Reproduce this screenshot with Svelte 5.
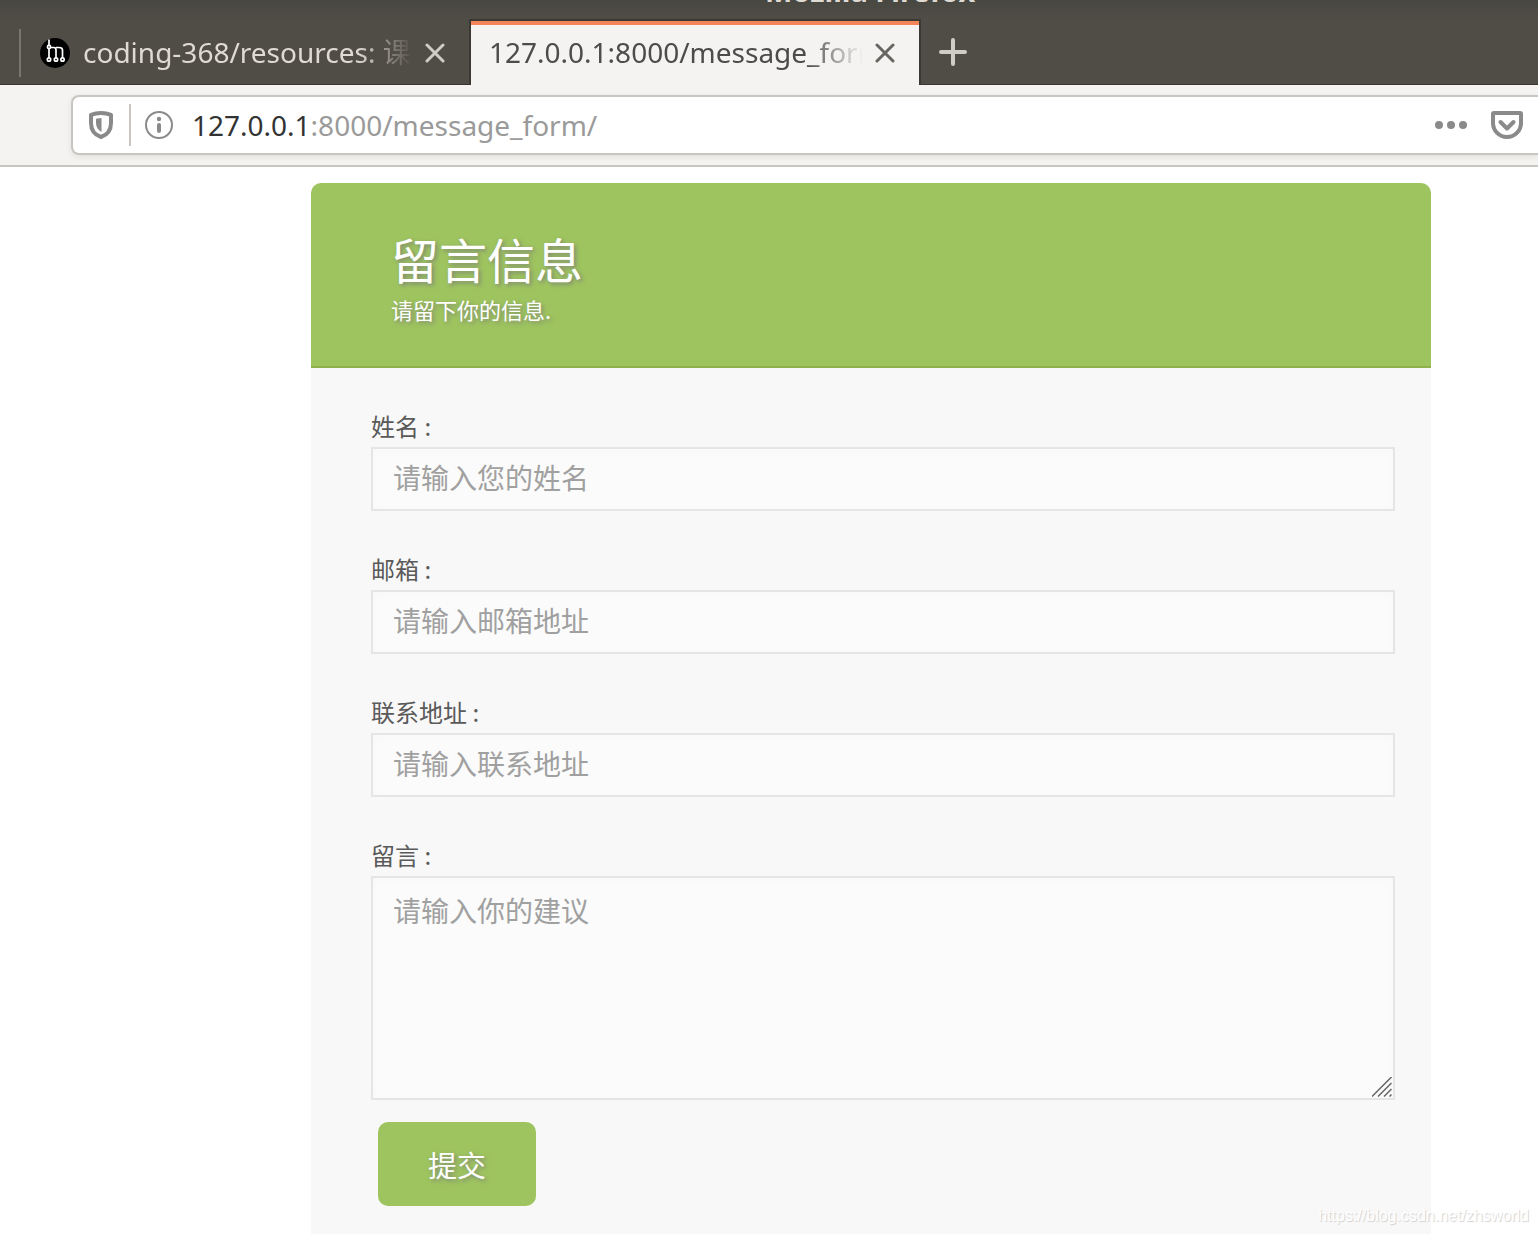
<script>
  const fields = [
    { id: 'name', label: '姓名 :', type: 'text', placeholder: '请输入您的姓名' },
    { id: 'email', label: '邮箱 :', type: 'email', placeholder: '请输入邮箱地址' },
    { id: 'address', label: '联系地址 :', type: 'text', placeholder: '请输入联系地址' }
  ];
  let values = $state({ name: '', email: '', address: '', message: '' });
</script>

<div class="window">
  <header class="chrome">
    <div class="titlebar"><span>Mozilla Firefox</span></div>
    <div class="tabs">
      <div class="tab">
        <svg class="favicon" viewBox="0 0 30 30" aria-hidden="true">
          <circle cx="15" cy="15" r="15" fill="#000" />
          <g fill="none" stroke="#fff" stroke-width="1.7">
            <path d="M9 1.5V20M9 9.5H14Q16 9.500 16 12V20M16 9.500H19Q22.500 9.500 22.500 12V20" />
            <circle cx="9" cy="9" r="1.600" fill="#000" />
            <circle cx="9" cy="21.500" r="1.700" fill="#000" />
            <circle cx="16" cy="21.500" r="1.700" fill="#000" />
            <circle cx="22.500" cy="21.500" r="1.700" fill="#000" />
          </g>
        </svg>
        <span class="tab-title">coding-368/resources: 课</span>
        <button class="icon" type="button" aria-label="Close tab">
          <svg width="20" height="20" viewBox="0 0 20 20"><path d="M2 2L18 18M18 2L2 18" /></svg>
        </button>
      </div>
      <div class="tab active">
        <span class="tab-title">127.0.0.1:8000/message_form/</span>
        <button class="icon" type="button" aria-label="Close tab">
          <svg width="20" height="20" viewBox="0 0 20 20"><path d="M2 2L18 18M18 2L2 18" /></svg>
        </button>
      </div>
      <button class="icon new-tab" type="button" aria-label="New tab">
        <svg width="28" height="28" viewBox="0 0 28 28"><path d="M14 2V26M2 14H26" /></svg>
      </button>
    </div>
    <div class="toolbar">
      <div class="urlbar">
        <svg class="shield" width="24" height="28" viewBox="0 0 24 28" aria-hidden="true">
          <path d="M12 2C8.500 2 5 2.600 2 3.800V12C2 19 6 24 12 26C18 24 22 19 22 12V3.800C19 2.600 15.500 2 12 2Z" fill="none" stroke="#8a8a8a" stroke-width="4" stroke-linejoin="round" />
          <path d="M12.500 7V21C9 19 7 16 7 12V7.800Z" fill="#8a8a8a" />
        </svg>
        <span class="divider"></span>
        <svg class="info" width="28" height="28" viewBox="0 0 28 28" aria-hidden="true">
          <circle cx="14" cy="14" r="13" fill="none" stroke="#8a8a8a" stroke-width="2" />
          <circle cx="14" cy="8" r="2.200" fill="#8a8a8a" />
          <rect x="12" y="12" width="4" height="10" rx="2" fill="#8a8a8a" />
        </svg>
        <span class="url"><b>127.0.0.1</b>:8000/message_form/</span>
        <svg class="dots" width="32" height="8" viewBox="0 0 32 8" fill="#8a8a8a" aria-hidden="true">
          <circle cx="4" cy="4" r="4" /><circle cx="16" cy="4" r="4" /><circle cx="28" cy="4" r="4" />
        </svg>
        <svg class="pocket" width="32" height="28" viewBox="0 0 32 28" fill="none" stroke="#8a8a8a" stroke-width="4" stroke-linecap="round" stroke-linejoin="round" aria-hidden="true">
          <path d="M3 2H29Q30 2 30 3V12A14 14 0 0 1 2 12V3Q2 2 3 2Z" />
          <path d="M9.500 11L16 17.500L22.500 11" />
        </svg>
      </div>
    </div>
  </header>

  <main>
    <form class="card" onsubmit={(e) => e.preventDefault()}>
      <div class="heading">
        <h1>留言信息</h1>
        <p>请留下你的信息.</p>
      </div>
      <div class="body">
        {#each fields as field}
          <div class="field">
            <label for={field.id}>{field.label}</label>
            <input id={field.id} type={field.type} placeholder={field.placeholder} bind:value={values[field.id]} />
          </div>
        {/each}
        <div class="field">
          <label for="message">留言 :</label>
          <div class="area">
            <textarea id="message" placeholder="请输入你的建议" bind:value={values.message}></textarea>
            <svg class="grip" width="20" height="20" viewBox="0 0 20 20" aria-hidden="true">
              <path d="M0 19.500L19.500 0M6 19.500L19.500 6M12 19.500L19.500 12M17.500 19.500L19.500 17.500" />
            </svg>
          </div>
        </div>
        <button class="submit" type="submit">提交</button>
      </div>
    </form>
  </main>
  <span class="watermark">https://blog.csdn.net/zhsworld</span>
</div>

<style>
  :global(body) {
    background: #fff;
  }

  .window {
    position: relative;
    display: flex;
    flex-direction: column;
    min-height: 100vh;
    overflow: hidden;
    font-family: 'Noto Sans', 'Noto Sans CJK SC', sans-serif;
  }

  .chrome {
    background: linear-gradient(#484741, #504d46 20px);
    font-size: 28px;
    line-height: 40px;
  }

  .titlebar {
    display: flex;
    align-items: flex-end;
    box-sizing: border-box;
    height: 19px;
    padding: 0 0 8px 765px;
    overflow: hidden;
    color: #dfdbd2;
    font-size: 29px;
    font-weight: 700;
  }

  .tabs {
    display: flex;
    height: 66px;
    box-sizing: border-box;
    padding-left: 19px;
    box-shadow: inset 0 -1px #3a3732;
  }

  .tab {
    display: flex;
    align-items: center;
    box-sizing: border-box;
    width: 450px;
    padding: 2px 24px 0 19px;
    color: #dfdbd2;
    position: relative;
  }

  .tab:first-child::before {
    content: '';
    position: absolute;
    left: 0;
    top: 10px;
    width: 2px;
    height: 48px;
    background: #797670;
  }

  .tab.active {
    width: 452px;
    border: 2px solid #3b3933;
    border-bottom: 0;
    padding: 0 24px 0 18px;
    background: #f4f3f1;
    box-shadow: inset 0 4px #f48358;
    color: #4c4c4c;
  }

  .favicon {
    width: 30px;
    height: 30px;
    margin: 0 13px 0 2px;
  }

  .tab-title {
    flex: 1;
    min-width: 0;
    padding-bottom: 2px;
    overflow: hidden;
    white-space: nowrap;
    mask-image: linear-gradient(to left, transparent, #000 56px);
  }

  .icon {
    display: flex;
    border: 0;
    padding: 0;
    background: none;
    color: #d0cdc5;
    cursor: pointer;
  }

  .tab .icon {
    margin-left: 12px;
  }

  .active .icon {
    color: #666561;
  }

  .icon path {
    fill: none;
    stroke: currentColor;
    stroke-width: 3;
    stroke-linecap: round;
  }

  .new-tab {
    align-items: center;
    padding-left: 18px;
  }

  .new-tab path {
    stroke-width: 4;
  }

  .toolbar {
    padding: 10px 0 10px 71px;
    border-bottom: 2px solid #c9c5c1;
    background: #f4f3f1;
  }

  .urlbar {
    display: flex;
    align-items: center;
    box-sizing: border-box;
    height: 60px;
    padding: 0 15px 0 16px;
    border: 2px solid #c9c5c1;
    border-right: 0;
    border-radius: 8px 0 0 8px;
    background: #fff;
    box-shadow: 0 2px 6px rgba(0, 0, 0, 0.08);
  }

  .divider {
    width: 2px;
    height: 42px;
    margin: 0 14px 0 16px;
    background: #c9c5c1;
  }

  .url {
    flex: 1;
    margin-left: 19px;
    color: #9a9a9a;
  }

  .url b {
    color: #333;
    font-weight: 400;
  }

  .pocket {
    margin-left: 24px;
  }

  main {
    flex: 1;
    display: flex;
    padding: 16px 107px 0 311px;
    font-family: 'Noto Sans CJK SC', sans-serif;
  }

  .card {
    flex: 1;
    border-radius: 10px 10px 0 0;
    background: #f8f8f8;
    overflow: hidden;
  }

  .heading {
    padding: 43px 80px 40px;
    border-bottom: 2px solid #8eb14b;
    background: #9ec45f;
    color: #fff;
    text-shadow: 2px 2px 4px rgba(120, 120, 120, 0.8);
  }

  h1,
  p {
    margin: 0;
    font-weight: 400;
  }

  h1 {
    margin-bottom: 3px;
    font-size: 48px;
    line-height: 64px;
  }

  p {
    font-size: 22px;
    line-height: 33px;
  }

  .body {
    padding: 40px 36px 28px 60px;
  }

  .field {
    display: flex;
    flex-direction: column;
    margin-bottom: 40px;
  }

  label {
    padding-bottom: 4px;
    color: #5a5a5a;
    font-size: 24px;
    line-height: 35px;
  }

  input,
  textarea {
    display: block;
    box-sizing: border-box;
    width: 100%;
    margin: 0;
    border: 2px solid #e5e5e5;
    border-radius: 0;
    background: #fbfbfb;
    box-shadow: inset 0 2px 8px #f8f8f8;
    color: #555;
    font-family: inherit;
    font-size: 28px;
    line-height: 42px;
    outline: 0;
  }

  input {
    height: 64px;
    padding: 0 20px 4px;
  }

  textarea {
    height: 224px;
    padding: 11px 20px;
    resize: none;
  }

  ::placeholder {
    color: #a0a0a0;
    opacity: 1;
  }

  .area {
    position: relative;
  }

  .grip {
    position: absolute;
    right: 3px;
    bottom: 3px;
    fill: none;
    stroke: #666;
    stroke-width: 1.5;
  }

  .field:last-of-type {
    margin-bottom: 22px;
  }

  .submit {
    display: block;
    margin-left: 7px;
    padding: 20px 50px;
    border: 0;
    border-radius: 10px;
    background: #9ec45f;
    color: #fff;
    font-family: inherit;
    font-size: 29px;
    line-height: 44px;
    text-shadow: 2px 2px 4px rgba(120, 120, 120, 0.8);
    cursor: pointer;
  }

  .watermark {
    position: absolute;
    right: 9px;
    bottom: 8px;
    color: #fff;
    font: 16px/20px 'Liberation Sans', sans-serif;
    text-shadow: 1px 1px 1px #d0d0d0;
  }
</style>
